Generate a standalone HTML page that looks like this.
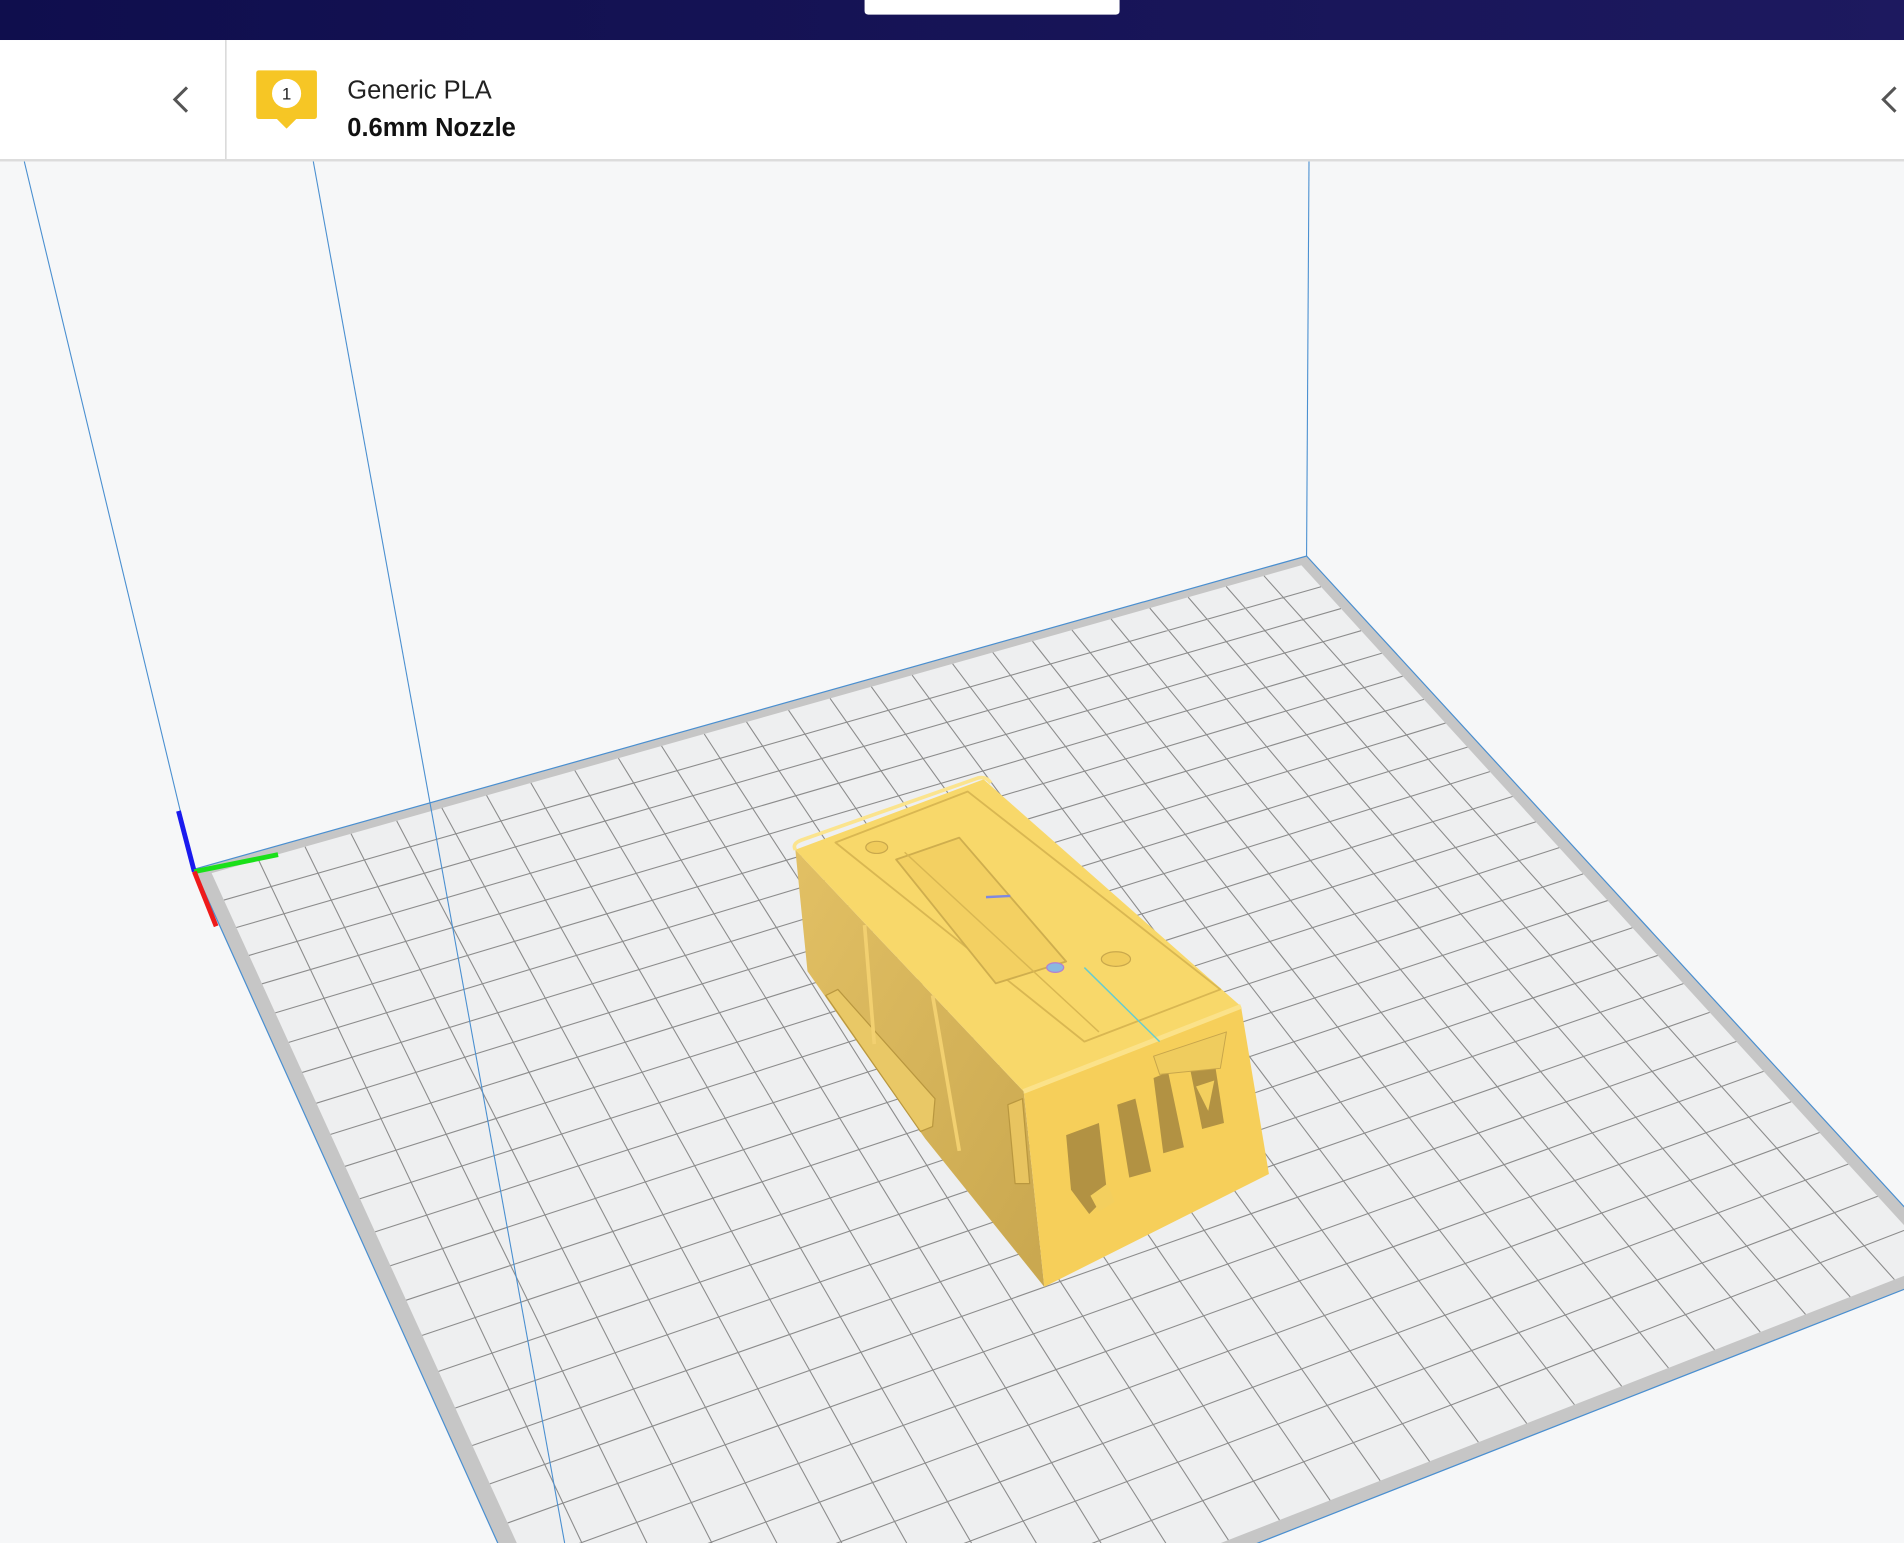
<!DOCTYPE html>
<html><head><meta charset="utf-8">
<style>
html,body{margin:0;padding:0;width:1904px;height:1543px;overflow:hidden;background:#f6f7f8;position:relative;}
svg{display:block;position:absolute;left:0;top:0}
</style></head>
<body>
<svg id="s" width="1904" height="1543" viewBox="0 0 1568 1271" preserveAspectRatio="none" xmlns="http://www.w3.org/2000/svg">
<defs>
<linearGradient id="hd" x1="0" x2="1" y1="0" y2="0"><stop offset="0" stop-color="#0f0e4d"/><stop offset="1" stop-color="#1d195f"/></linearGradient>
<linearGradient id="sd" x1="0" x2="1" y1="0" y2="1"><stop offset="0" stop-color="#e2c064"/><stop offset="1" stop-color="#c9a74f"/></linearGradient>
</defs>
<rect width="1568" height="1271" fill="#f6f7f8"/>
<rect width="1568" height="33" fill="url(#hd)"/>
<path d="M712,0 H922 V9 Q922,12 919,12 H715 Q712,12 712,9 Z" fill="#fff"/>
<rect y="33" width="1568" height="98" fill="#fff"/>
<rect y="131" width="1568" height="2" fill="#dcdcdc"/>
<rect x="185.5" y="33" width="1" height="98" fill="#cfcfcf"/>
<path d="M154,72 L144,82 L154,92" fill="none" stroke="#555" stroke-width="2.5"/>
<path d="M1561,72 L1551,82 L1561,92" fill="none" stroke="#555" stroke-width="2.5"/>
<rect x="211" y="58" width="50" height="40" rx="2" fill="#f6c625"/>
<path d="M227,97 L245,97 L236,106 Z" fill="#f6c625"/>
<circle cx="236" cy="77" r="12" fill="#fff"/>
<text x="236" y="82" font-family="Liberation Sans, sans-serif" font-size="14" text-anchor="middle" fill="#222">1</text>
<text x="286" y="81" font-family="Liberation Sans, sans-serif" font-size="21" fill="#222">Generic PLA</text>
<text x="286" y="112" font-family="Liberation Sans, sans-serif" font-size="21" font-weight="bold" fill="#111">0.6mm Nozzle</text>
<g stroke="#4a8fd0" stroke-width="0.9" fill="none">
<line x1="20" y1="133" x2="160" y2="716"/>
<line x1="1078" y1="133" x2="1076" y2="458"/>
</g>
<polygon points="160,716 1076,458 1614,1044 504,1480" fill="#c6c6c6" stroke="#4a8fd0" stroke-width="1"/>
<g id="grid"></g>
<line x1="258" y1="133" x2="465" y2="1271" stroke="#4a8fd0" stroke-width="0.9"/>
<g stroke-linejoin="round">
<polygon points="655,700 665,800 700,850 762,938 860,1060 843,899" fill="url(#sd)"/>
<polygon points="843,899 1022,829 1045,967 860,1060" fill="#f6cf5a"/>
<polygon points="655,700 810,642 1022,829 843,899" fill="#f8d86a"/>
<path d="M655,700 Q652,695 660,692 L805,641 Q812,639 816,645" fill="none" stroke="#fbe48e" stroke-width="3"/>
<path d="M843,899 L1022,829" stroke="#fbe28a" stroke-width="4"/>
<polygon points="688,694 797,652 1005,815 893,858" fill="none" stroke="#d9b752" stroke-width="1.5"/>
<polygon points="738,708 790,690 878,792 820,810" fill="#f3d062" stroke="#cfae4e" stroke-width="1.5"/>
<line x1="745" y1="702" x2="905" y2="850" stroke="#d9b752" stroke-width="1.2"/>
<ellipse cx="722" cy="698" rx="9" ry="5" fill="#f0cc5c" stroke="#c9a84c"/>
<ellipse cx="919" cy="790" rx="12" ry="6" fill="#f0cc5c" stroke="#c9a84c"/>
<ellipse cx="869" cy="797" rx="7" ry="4" fill="#8ab8e0" stroke="#b57fd0"/>
<line x1="893" y1="797" x2="955" y2="858" stroke="#66ccd0" stroke-width="1.2"/>
<line x1="812" y1="739" x2="832" y2="738" stroke="#7f88e0" stroke-width="2"/>
<polygon points="680,820 690,815 770,905 768,928 758,932" fill="#e9c866" stroke="#b9973f"/>
<line x1="712" y1="762" x2="720" y2="860" stroke="#f2d070" stroke-width="3"/>
<line x1="768" y1="820" x2="790" y2="948" stroke="#f2d070" stroke-width="3"/>
<polygon points="878,935 905,925 912,985 897,1000 882,980" fill="#b29243"/>
<polygon points="898,985 912,975 918,990 905,998" fill="#f3cf5e"/>
<polygon points="920,910 935,905 948,965 930,970" fill="#b29243"/>
<polygon points="950,888 962,883 975,945 958,950" fill="#b29243"/>
<polygon points="980,880 1000,873 1008,925 990,930" fill="#b29243"/>
<polygon points="985,895 1000,890 995,915" fill="#f3cf5e"/>
<polygon points="830,910 842,905 848,975 836,975" fill="#e8c460" stroke="#b9973f"/>
<polygon points="950,870 1010,850 1005,880 955,885" fill="#efcc5e" stroke="#c7a54b" stroke-width="0.8"/>
</g>
<line x1="147" y1="668" x2="160" y2="718" stroke="#1a1aee" stroke-width="4"/>
<line x1="160" y1="718" x2="229" y2="704" stroke="#19e019" stroke-width="4"/>
<line x1="160" y1="718" x2="178" y2="763" stroke="#ee1a1a" stroke-width="4"/>
</svg>
<script>
(function(){
var P=[[160,716],[1076,458],[1614,1044],[504,1480]];
var x0=P[0][0],y0=P[0][1],x1=P[1][0],y1=P[1][1],x2=P[2][0],y2=P[2][1],x3=P[3][0],y3=P[3][1];
var sx=x0-x1+x2-x3,sy=y0-y1+y2-y3,dx1=x1-x2,dx2=x3-x2,dy1=y1-y2,dy2=y3-y2;
var den=dx1*dy2-dx2*dy1;
var g=(sx*dy2-dx2*sy)/den,h=(dx1*sy-sx*dy1)/den;
var a=x1-x0+g*x1,b=x3-x0+h*x3,c=x0,d=y1-y0+g*y1,e=y3-y0+h*y3,f=y0;
function m(u,v){var w=g*u+h*v+1;return [(a*u+b*v+c)/w,(d*u+e*v+f)/w];}
var ns="http://www.w3.org/2000/svg",G=document.getElementById("grid");
var i0=0.011,i1=0.989;
var q=[m(i0,i0),m(i1,i0),m(i1,i1),m(i0,i1)];
var poly=document.createElementNS(ns,"polygon");
poly.setAttribute("points",q.map(function(p){return p[0]+","+p[1]}).join(" "));
poly.setAttribute("fill","#eeeff0");G.appendChild(poly);
var N=26,s="";
for(var k=1;k<N;k++){var t=i0+(i1-i0)*k/N;
var p=m(t,i0),r=m(t,i1);s+="M"+p[0].toFixed(1)+","+p[1].toFixed(1)+"L"+r[0].toFixed(1)+","+r[1].toFixed(1);
p=m(i0,t);r=m(i1,t);s+="M"+p[0].toFixed(1)+","+p[1].toFixed(1)+"L"+r[0].toFixed(1)+","+r[1].toFixed(1);}
var pa=document.createElementNS(ns,"path");pa.setAttribute("d",s);pa.setAttribute("stroke","#8c8c8c");pa.setAttribute("stroke-width","0.9");pa.setAttribute("fill","none");G.appendChild(pa);
})();
</script>
</body></html>
